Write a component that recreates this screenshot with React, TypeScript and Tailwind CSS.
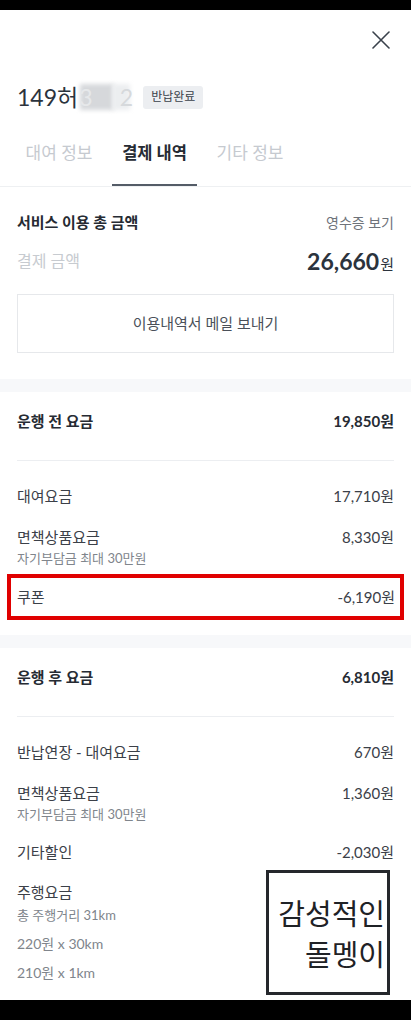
import React from 'react';

const FONT = "font-['Lato','Noto_Sans_CJK_KR',sans-serif]";

interface FeeRowProps {
  label: string;
  amount?: string;
  sub?: string;
  className?: string;
}

const FeeRow: React.FC<FeeRowProps> = ({ label, amount, sub, className = '' }) => (
  <div className={className}>
    <div className="flex items-center justify-between h-[24px] text-[15px] text-[#3b4048]">
      <span>{label}</span>
      {amount && <span>{amount}</span>}
    </div>
    {sub && <div className="h-[18px] leading-[18px] text-[13px] text-[#80858c]">{sub}</div>}
  </div>
);

const SectionHeader: React.FC<{ title: string; amount: string }> = ({ title, amount }) => (
  <>
    <div className="flex items-center justify-between h-[22px] text-[15px] font-bold text-[#262b33]">
      <span>{title}</span>
      <span>{amount}</span>
    </div>
    <div className="mt-[28px] h-px bg-[#eceef1]" />
  </>
);

const Band: React.FC = () => <div className="h-[13px] bg-[#f7f8fa]" />;

export default function App() {
  return (
    <div className={`${FONT} relative w-[411px] h-[1020px] overflow-hidden bg-white flex flex-col`}>
      <div className="h-[10px] bg-black shrink-0" />

      <div className="flex-1 overflow-hidden">
        {/* header */}
        <div className="flex justify-end pt-[21px] pr-[21px]">
          <svg width="18" height="18" viewBox="0 0 18 18" fill="none" stroke="#39414b" strokeWidth="1.6" strokeLinecap="round">
            <path d="M1 1L17 17M17 1L1 17" />
          </svg>
        </div>

        <div className="mt-[32px] h-[32px] px-[17px] flex items-center">
          <span className="text-[23px] leading-[32px] text-[#2b333d]">149허</span>
          <span className="relative h-[26px] w-[56px] flex items-center text-[23px] text-[#e1e3e6]">
            <span className="absolute inset-y-0 left-[2px] right-[20px] bg-[#d6d8db] blur-[2px]" />
            <span className="absolute inset-y-0 left-[34px] right-[4px] bg-[#eceef0] blur-[2px]" />
            <span className="relative ml-[1px] text-[#e6e8ea]">3</span>
            <span className="relative ml-auto mr-[1px] text-[#d6d9dc]">2</span>
          </span>
          <span className="ml-[9px] h-[23px] px-[8px] flex items-center rounded-[3px] bg-[#eceef1] text-[12px] text-[#3a414a]">
            반납완료
          </span>
        </div>

        {/* tabs */}
        <div className="mt-[28px] flex pl-[16px] gap-[10px] text-[17px] leading-[24px]">
          <div className="w-[86px] text-center pb-[19px] border-b-2 border-transparent text-[#c6cad0]">대여 정보</div>
          <div className="w-[85px] text-center pb-[19px] border-b-2 border-[#545c67] font-bold text-[16.5px] text-[#262b33]">결제 내역</div>
          <div className="w-[86px] text-center pb-[19px] border-b-2 border-transparent text-[#c6cad0]">기타 정보</div>
        </div>
        <div className="h-px bg-[#eef0f2]" />

        {/* total */}
        <div className="px-[17px] pt-[24px] pb-[26px]">
          <div className="flex items-center justify-between h-[22px]">
            <span className="text-[15px] font-bold text-[#262b33]">서비스 이용 총 금액</span>
            <span className="text-[14px] text-[#6e737a]">영수증 보기</span>
          </div>
          <div className="mt-[12px] h-[32px] flex items-center justify-between">
            <span className="text-[16px] text-[#c7cbd0]">결제 금액</span>
            <span className="flex items-baseline text-[#2b333d]">
              <span className="text-[23px] font-bold">26,660</span>
              <span className="text-[15px] ml-[1px]">원</span>
            </span>
          </div>
          <div className="mt-[17px] h-[59px] border border-[#e6e8eb] flex items-center justify-center text-[15px] text-[#4a5059]">
            이용내역서 메일 보내기
          </div>
        </div>

        <Band />

        {/* before */}
        <div className="px-[17px] pt-[18px]">
          <SectionHeader title="운행 전 요금" amount="19,850원" />
          <FeeRow className="mt-[23px]" label="대여요금" amount="17,710원" />
          <FeeRow className="mt-[17px]" label="면책상품요금" amount="8,330원" sub="자기부담금 최대 30만원" />
        </div>
        <div className="mx-[7px] mt-[7px] h-[46px] border-4 border-[#e00000] px-[6px] flex items-center">
          <div className="flex-1 flex items-center justify-between text-[15px] text-[#3b4048]">
            <span>쿠폰</span>
            <span className="mr-[-1px]">-6,190원</span>
          </div>
        </div>
        <div className="mt-[15px]">
          <Band />
        </div>

        {/* after */}
        <div className="px-[17px] pt-[18px]">
          <SectionHeader title="운행 후 요금" amount="6,810원" />
          <FeeRow className="mt-[23px]" label="반납연장 - 대여요금" amount="670원" />
          <FeeRow className="mt-[17px]" label="면책상품요금" amount="1,360원" sub="자기부담금 최대 30만원" />
          <FeeRow className="mt-[17px]" label="기타할인" amount="-2,030원" />
          <FeeRow className="mt-[16px]" label="주행요금" />
          <div className="mt-[2px] h-[18px] leading-[18px] text-[13px] text-[#80858c]">총 주행거리 31km</div>
          <div className="mt-[9px] h-[20px] flex items-center text-[14px] text-[#80858c]">220원 x 30km</div>
          <div className="mt-[9px] h-[20px] flex items-center text-[14px] text-[#80858c]">210원 x 1km</div>
        </div>
      </div>

      <div className="h-[20px] bg-black shrink-0" />

      {/* watermark sticker */}
      <div className="absolute left-[266px] top-[870px] w-[124px] h-[125px] bg-white border-[3px] border-[#25282c] flex flex-col items-end justify-center pr-[2px] font-['Noto_Sans_CJK_KR',sans-serif] text-[29px] leading-[41px] text-[#1f2226]">
        <span>감성적인</span>
        <span>돌멩이</span>
      </div>
    </div>
  );
}
